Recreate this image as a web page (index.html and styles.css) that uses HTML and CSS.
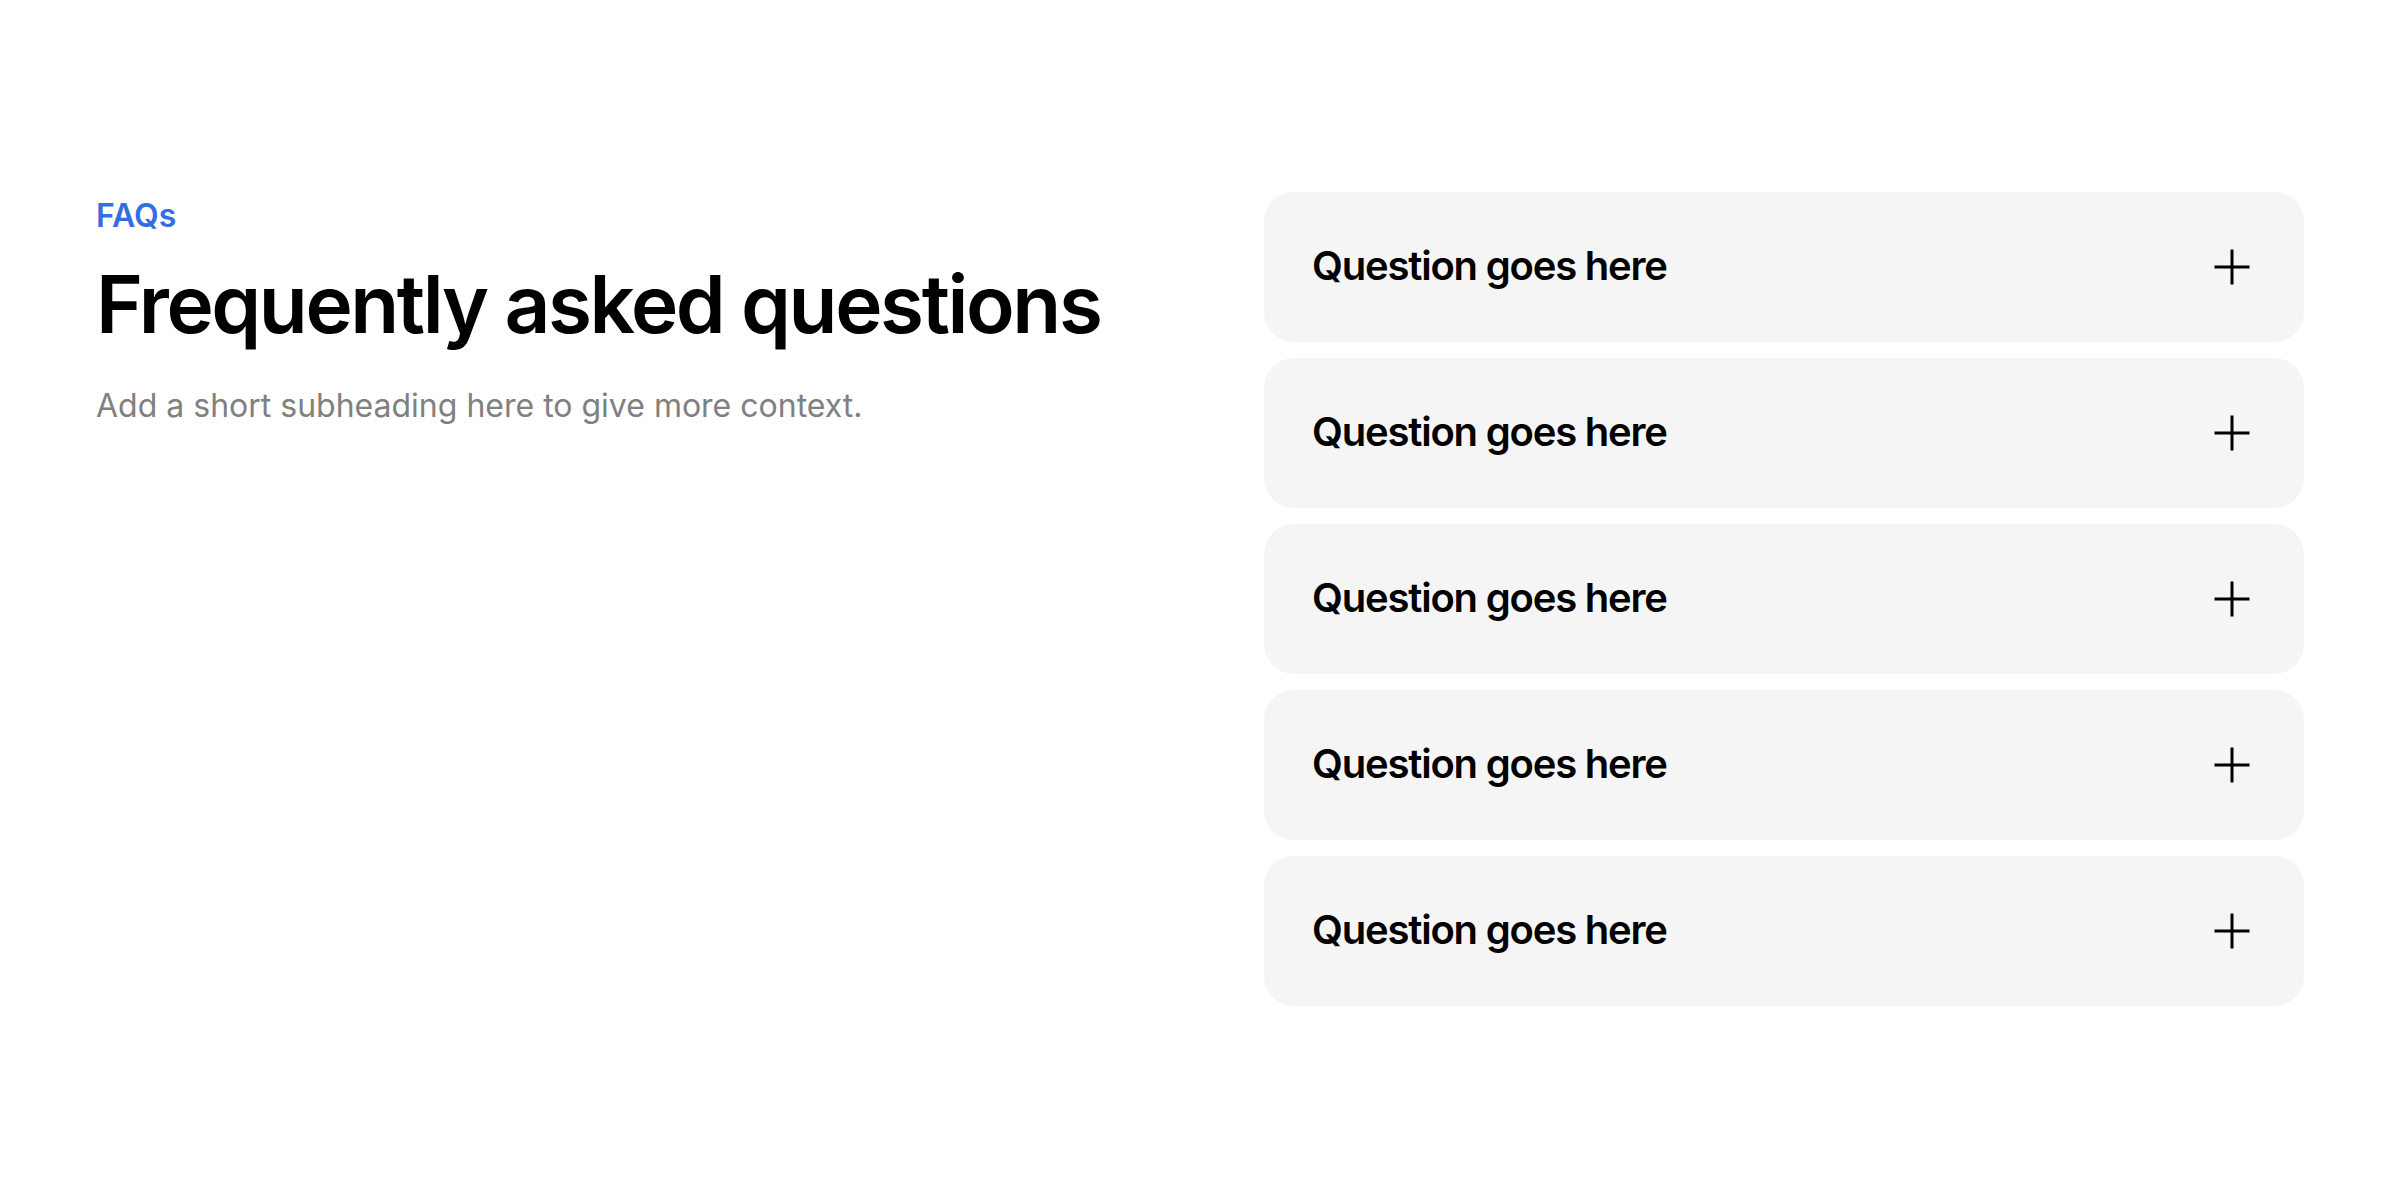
FILE: index.html
```html
<!DOCTYPE html>
<html lang="en">
<head>
<meta charset="utf-8">
<title>FAQs</title>
<link rel="stylesheet" href="styles.css">
</head>
<body>
<section class="faq">
  <div class="intro">
    <p class="eyebrow">FAQs</p>
    <h1 class="title">Frequently asked questions</h1>
    <p class="subtitle">Add a short subheading here to give more context.</p>
  </div>
  <div class="list">
    <div class="item"><span class="question">Question goes here</span><svg class="plus" viewBox="0 0 48 48" width="48" height="48"><path d="M6.5 24h35M24 6.5v35"/></svg></div>
    <div class="item"><span class="question">Question goes here</span><svg class="plus" viewBox="0 0 48 48" width="48" height="48"><path d="M6.5 24h35M24 6.5v35"/></svg></div>
    <div class="item"><span class="question">Question goes here</span><svg class="plus" viewBox="0 0 48 48" width="48" height="48"><path d="M6.5 24h35M24 6.5v35"/></svg></div>
    <div class="item"><span class="question">Question goes here</span><svg class="plus" viewBox="0 0 48 48" width="48" height="48"><path d="M6.5 24h35M24 6.5v35"/></svg></div>
    <div class="item"><span class="question">Question goes here</span><svg class="plus" viewBox="0 0 48 48" width="48" height="48"><path d="M6.5 24h35M24 6.5v35"/></svg></div>
  </div>
</section>
</body>
</html>
```
FILE: styles.css
```css
* { box-sizing: border-box; }
html, body { margin: 0; padding: 0; background: #ffffff; }
body { font-family: Inter, "Noto Sans", sans-serif; color: #000; }
.faq {
  display: grid;
  grid-template-columns: 1fr 1fr;
  column-gap: 128px;
  padding: 192px 96px 96px;
  align-items: start;
}
.eyebrow {
  margin: 0;
  font-size: 32px;
  line-height: 48px;
  font-weight: 600;
  color: #356ee0;
}
.title {
  margin: 16px 0 0;
  font-size: 80px;
  line-height: 96px;
  font-weight: 600;
  letter-spacing: -0.03em;
}
.subtitle {
  margin: 31px 0 0;
  font-size: 32px;
  line-height: 45px;
  font-weight: 400;
  color: #808080;
}
.list {
  display: flex;
  flex-direction: column;
  gap: 16px;
}
.item {
  height: 150px;
  background: #f5f5f5;
  border-radius: 30px;
  padding: 0 48px;
  display: flex;
  align-items: center;
  justify-content: space-between;
}
.question {
  font-size: 40px;
  font-weight: 600;
  letter-spacing: -0.03em;
  line-height: 48px;
  margin-top: -2px;
}
.plus {
  flex: none;
  fill: none;
  stroke: #000;
  stroke-width: 3;
}
```
